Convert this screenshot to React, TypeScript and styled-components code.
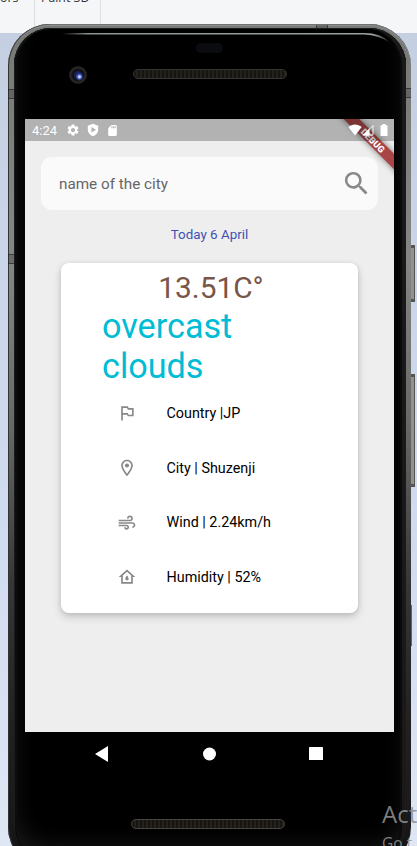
import React from "react";
import styled, { createGlobalStyle } from "styled-components";
import {
  MdAir,
  MdOutlinedFlag,
  MdOutlineLocationOn,
  MdOutlineWaterDamage,
  MdSdCard,
  MdSearch,
  MdSettings,
} from "react-icons/md";

const GlobalStyle = createGlobalStyle`
  * { box-sizing: border-box; }
  html, body { margin: 0; padding: 0; overflow: hidden; }
  body { font-family: Roboto, "Liberation Sans", sans-serif; }
  svg { display: block; flex: none; }
`;

const Desktop = styled.div`
  position: relative;
  width: 417px;
  height: 846px;
  overflow: hidden;
  background: linear-gradient(#c5cfe2 33px, #cbd6ea 300px, #d2dcf0 550px, #dfe7f4 846px);
`;

const Ribbon = styled.div`
  display: flex;
  height: 33px;
  overflow: hidden;
  background: #f5f6f7;
  font: 12.3px/16px "Open Sans", "Noto Sans", sans-serif;
  color: #333;
`;

const RibbonItem = styled.div<{ $width: number; $indent: number }>`
  width: ${(p) => p.$width}px;
  padding-left: ${(p) => p.$indent}px;
  border-right: 1px solid #dddedf;
  white-space: nowrap;
  flex: none;

  span {
    display: block;
    margin-top: -10px;
  }
`;

const Phone = styled.div`
  position: absolute;
  left: 8px;
  top: 24px;
  width: 403px;
  height: 845px;
  padding: 4px 5px 4px 6px;
  border-radius: 42px;
  background: linear-gradient(#777977, #858785 28%, #666866 48%, #363736 66%, #222 82%, #141414);
  box-shadow: inset 1px 0 0 #333, inset 0 1px 0 #6f7270, inset 0 2px 0 #8b8e8c;
`;

const Glass = styled.div`
  height: 100%;
  border-radius: 37px;
  padding: 0 12px 0 11px;
  display: flex;
  flex-direction: column;
  background: #000;
  box-shadow: inset 0 0 0 1px #1a1c1b, inset -4px 0 0 #191919, inset -6px 0 0 #0a0a0a,
    inset 3px 0 0 #0c0e0d, inset 0 -18px 22px #181818;
`;

const Forehead = styled.div`
  height: 91px;
  flex: none;
  display: grid;
  grid-template-columns: 108px 154px 1fr;
  grid-template-rows: 12px 15px 1fr;
`;

const Camera = styled.div`
  grid-column: 1;
  grid-row: 3;
  width: 18px;
  height: 18px;
  margin: 11px 0 0 44px;
  border-radius: 50%;
  background: radial-gradient(circle at 58% 60%, #c6d4ff 0 1px, #4c62c6 2px, transparent 4px),
    radial-gradient(circle, #1b2259 0 3px, #0c0d18 5px, #151515 6px, #282828 7px, #202020 9px);
`;

const Sensor = styled.div`
  grid-column: 2;
  grid-row: 1 / 3;
  justify-self: center;
  width: 27px;
  height: 10px;
  margin: 15px 2px 0 0;
  border-radius: 5px;
  background: #0b0c10;
`;

const Speaker = styled.div`
  width: 154px;
  height: 10px;
  border-radius: 5px;
  border: 1px solid #353535;
  background: repeating-linear-gradient(90deg, #17150f 0 2px, #25221d 2px 4px);
`;

const TopSpeaker = styled(Speaker)`
  grid-column: 2;
  grid-row: 3;
  margin-top: 14px;
`;

const Screen = styled.div`
  position: relative;
  width: 369px;
  height: 613px;
  flex: none;
  overflow: hidden;
  background: #eeeeee;
`;

const DebugBanner = styled.div`
  position: absolute;
  left: 287.5px;
  top: 15.5px;
  width: 120px;
  height: 11px;
  transform: rotate(45deg);
  background: #a94545;
  box-shadow: 0 0 6px rgba(0, 0, 0, 0.5);
  color: #fff;
  font-size: 9.2px;
  line-height: 11px;
  font-weight: 900;
  text-align: center;
`;

const StatusBar = styled.div`
  position: relative;
  display: flex;
  align-items: center;
  height: 22px;
  padding: 0 6.5px 0 7px;
  background: rgba(0, 0, 0, 0.25);
  color: #fff;
`;

const Clock = styled.span`
  width: 34px;
  font-size: 13px;
`;

const StatusIcons = styled.div`
  display: flex;
  align-items: center;
  gap: 7px;
`;

const SignalIcons = styled(StatusIcons)`
  margin-left: auto;
  gap: 0;

  svg:last-child { margin-left: 6px; }
`;

const SearchBox = styled.div`
  display: flex;
  align-items: center;
  justify-content: space-between;
  height: 53px;
  margin: 16px 16px 0;
  padding: 0 6px 0 18px;
  border-radius: 11px;
  background: #fafafa;
  color: #666;
  font-size: 15.25px;
`;

const SearchIcon = styled(MdSearch)`
  color: #888;
`;

const Today = styled.div`
  height: 53px;
  line-height: 49px;
  text-align: center;
  font-size: 13.4px;
  color: #3f51b5;
`;

const Card = styled.div`
  width: 297px;
  height: 350px;
  margin: 0 auto 0 36px;
  border-radius: 8px;
  background: #fff;
  box-shadow: 0 4px 8px rgba(0, 0, 0, 0.16), 0 1px 5px rgba(0, 0, 0, 0.1);
`;

const Temperature = styled.div`
  height: 43px;
  padding: 4px 0 0 3px;
  line-height: 42px;
  text-align: center;
  font-size: 29.8px;
  color: #795548;
`;

const Conditions = styled.div`
  width: 170px;
  height: 80px;
  margin-left: 41px;
  font-size: 34.2px;
  line-height: 40px;
  color: #00bcd4;
`;

const Facts = styled.div`
  display: grid;
  grid-auto-rows: 54.7px;
`;

const Fact = styled.div`
  display: flex;
  align-items: center;
  gap: 29.5px;
  padding-left: 56px;
  font-size: 14.35px;
  color: #000;

  svg { color: #888; }
`;

const NavBar = styled.div`
  display: flex;
  justify-content: space-between;
  align-items: center;
  height: 43px;
  flex: none;
  padding: 0 71px 0 70px;
`;

const BottomSpeaker = styled(Speaker)`
  margin: 44px 0 0 106px;
  border-color: #444;
`;

const SideKey = styled.div<{ $top: number; $height: number; $dim?: boolean }>`
  position: absolute;
  left: 411px;
  top: ${(p) => p.$top}px;
  width: ${(p) => (p.$dim ? 1 : 4)}px;
  height: ${(p) => p.$height}px;
  background: ${(p) => (p.$dim ? "#666" : "#92928f")};
  border: solid #555;
  border-width: ${(p) => (p.$dim ? "0" : "3px 1px 3px 0")};
`;

const Antenna = styled.div<{ $left: number; $top: number; $across?: boolean }>`
  position: absolute;
  left: ${(p) => p.$left}px;
  top: ${(p) => p.$top}px;
  width: ${(p) => (p.$across ? 12 : 6)}px;
  height: ${(p) => (p.$across ? 4 : 10)}px;
  border: solid rgba(30, 30, 30, 0.6);
  border-width: ${(p) => (p.$across ? "0 1px" : "1px 0")};
  background: rgba(30, 30, 30, 0.25);
`;

const Glare = styled.svg`
  position: absolute;
  left: 0;
  top: 0;
`;

const Watermark = styled.div`
  position: absolute;
  left: 382px;
  top: 798px;
  white-space: nowrap;
  font-family: "Open Sans", "Noto Sans", sans-serif;
  color: rgba(142, 142, 142, 0.9);
`;

const WatermarkTitle = styled.div`
  font-size: 24px;
  line-height: 32px;
`;

const WatermarkLine = styled.div`
  font-size: 15.5px;
  line-height: 26px;
`;

const ShieldIcon = () => (
  <svg width="12" height="14" viewBox="0 0 12 14">
    <path
      fill="#fff"
      fillRule="evenodd"
      d="M6 .8 11.2 2.7v4c0 3-2.2 5.400-5.200 6.500C3 12.100.8 9.700.8 6.700v-4ZM4.400 4v5.400L9 6.700Z"
    />
  </svg>
);

const WifiIcon = () => (
  <svg width="14" height="12" viewBox="0 0 14 12">
    <path fill="#fff" d="M.3 3C4-.4 10-.4 13.700 3L7 11.500Z" />
  </svg>
);

const CellIcon = () => (
  <svg width="12" height="12" viewBox="0 0 12 12">
    <path fill="none" stroke="#fff" strokeWidth=".9" d="M1.500 11 11 1.500V11Z" />
    <path fill="#fff" d="M.5 11.500 7.500 4.500v7Z" />
  </svg>
);

const BatteryIcon = () => (
  <svg width="8" height="12" viewBox="0 0 8 12">
    <path fill="#fff" d="M2.500 0h3v1.300h2V12H.5V1.300h2Z" />
  </svg>
);

const facts = [
  { Icon: MdOutlinedFlag, text: "Country |JP" },
  { Icon: MdOutlineLocationOn, text: "City | Shuzenji" },
  { Icon: MdAir, text: "Wind | 2.24km/h" },
  { Icon: MdOutlineWaterDamage, text: "Humidity | 52%" },
];

export default function App() {
  return (
    <Desktop>
      <GlobalStyle />
      <Ribbon>
        <RibbonItem $width={35} $indent={0}><span>ors</span></RibbonItem>
        <RibbonItem $width={66} $indent={6}><span>Paint 3D</span></RibbonItem>
      </Ribbon>
      <SideKey $top={245} $height={57} />
      <SideKey $top={374} $height={113} />
      <SideKey $top={605} $height={41} $dim />
      <Phone>
        <Glass>
          <Forehead>
            <Sensor />
            <Camera />
            <TopSpeaker />
          </Forehead>
          <Screen>
            <DebugBanner>DEBUG</DebugBanner>
            <StatusBar>
              <Clock>4:24</Clock>
              <StatusIcons>
                <MdSettings size={14} />
                <ShieldIcon />
                <MdSdCard size={13} />
              </StatusIcons>
              <SignalIcons>
                <WifiIcon />
                <CellIcon />
                <BatteryIcon />
              </SignalIcons>
            </StatusBar>
            <SearchBox>
              <span>name of the city</span>
              <SearchIcon size={31} />
            </SearchBox>
            <Today>Today 6 April</Today>
            <Card>
              <Temperature>13.51C°</Temperature>
              <Conditions>overcast clouds</Conditions>
              <Facts>
                {facts.map(({ Icon, text }) => (
                  <Fact key={text}>
                    <Icon size={20} />
                    <span>{text}</span>
                  </Fact>
                ))}
              </Facts>
            </Card>
          </Screen>
          <NavBar>
            <svg width="13" height="16" viewBox="0 0 13 16"><path fill="#fff" d="M13 0v16L0 8Z" /></svg>
            <svg width="14" height="14" viewBox="0 0 14 14"><circle cx="7.500" cy="7" r="6.500" fill="#fff" /></svg>
            <svg width="14" height="14" viewBox="0 0 14 14"><rect width="14" height="13" rx=".5" fill="#fff" /></svg>
          </NavBar>
          <BottomSpeaker />
        </Glass>
      </Phone>
      <Antenna $left={8} $top={89} />
      <Antenna $left={8} $top={254} />
      <Antenna $left={405} $top={88} />
      <Antenna $left={405} $top={795} />
      <Antenna $left={316} $top={25} $across />
      <Glare width="417" height="60" viewBox="0 0 417 60">
        <defs>
          <linearGradient id="glare" x1="62" x2="389" y1="0" y2="0" gradientUnits="userSpaceOnUse">
            <stop offset="0" stopColor="#8a9595" stopOpacity="0" />
            <stop offset=".08" stopColor="#8a9595" />
            <stop offset=".95" stopColor="#9aa3a3" />
            <stop offset="1" stopColor="#8a9595" stopOpacity=".4" />
          </linearGradient>
        </defs>
        <path d="M62 33H364Q381 33 389 42Q380 35.500 364 34.500H62Z" fill="url(#glare)" />
      </Glare>
      <Watermark>
        <WatermarkTitle>Act</WatermarkTitle>
        <WatermarkLine>Go t</WatermarkLine>
      </Watermark>
    </Desktop>
  );
}
